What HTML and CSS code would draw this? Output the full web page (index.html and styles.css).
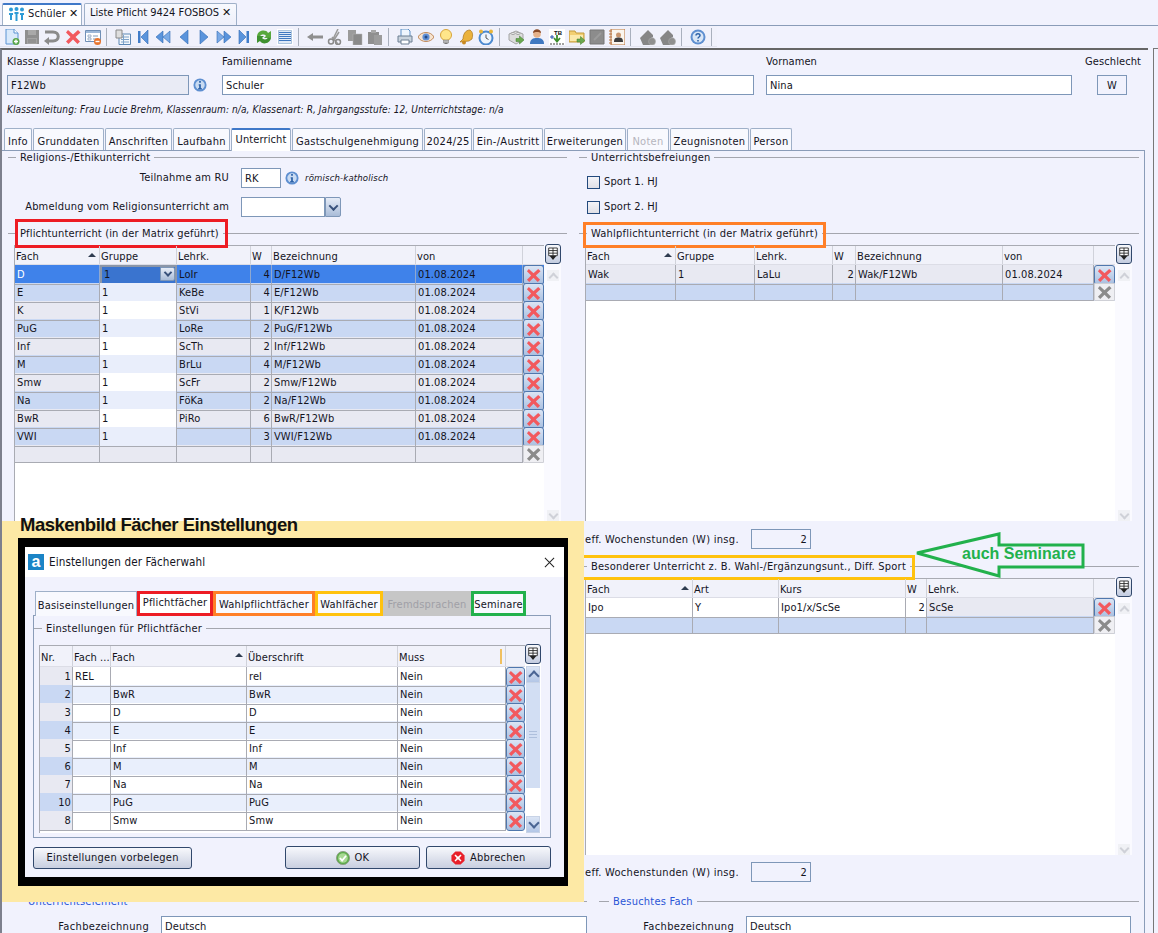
FILE: index.html
```html
<!DOCTYPE html>
<html lang="de">
<head>
<meta charset="utf-8">
<title>Schüler</title>
<link rel="stylesheet" href="styles.css">
</head>
<body>
<svg class="defs" width="0" height="0" aria-hidden="true">
<defs>
<symbol id="i-new" viewBox="0 0 16 16"><path d="M2 0h8l4 4v11H2z" fill="#d9e9fb" stroke="#5b93d2"/><path d="M10 0v4h4" fill="#fff" stroke="#5b93d2"/><circle cx="12" cy="12.5" r="3.5" fill="#5aa64a"/><path d="M10 12.5h4M12 10.5v4" stroke="#fff" stroke-width="1.4"/></symbol>
<symbol id="i-save" viewBox="0 0 16 16"><path d="M1 1h14v14H1z" fill="#8f8f8f"/><path d="M4 1h8v5H4z" fill="#a9a9a9"/><path d="M3 9h10v6H3z" fill="#a3a3a3"/><path d="M4 11h8M4 13h8" stroke="#808080"/></symbol>
<symbol id="i-undo" viewBox="0 0 16 16"><path d="M1 3h8c7 0 7 9 0 9H4" fill="none" stroke="#8b8b8b" stroke-width="3"/><path d="M5 8v8L0 12z" fill="#8b8b8b"/></symbol>
<symbol id="i-x" viewBox="0 0 16 16"><path d="M3 1l5 4.500L13 1l2.500 2.500L10.500 8l4.500 4.500L12.500 15 8 10.500 3.500 15 1 12.500 5.500 8 1 3.500z" fill="#f2595e"/></symbol>
<symbol id="i-xg" viewBox="0 0 16 16"><path d="M3 1l5 4.500L13 1l2.500 2.500L10.500 8l4.500 4.500L12.500 15 8 10.500 3.500 15 1 12.500 5.500 8 1 3.500z" fill="#8b8b8b"/></symbol>
<symbol id="i-card" viewBox="0 0 16 16"><path d="M.5 1.500h15v11H.5z" fill="#fff" stroke="#6f8fb6"/><path d="M1 2h14v2H1z" fill="#9db8d8"/><path d="M3 6h3v2H3zM3 9h3v2H3z" fill="#fff" stroke="#7f9ab8" stroke-width=".7"/><path d="M8 7h5M8 10h3" stroke="#7f9ab8"/><circle cx="12.500" cy="12.500" r="3.500" fill="#e8742c"/><path d="M10.500 12.500h4" stroke="#fff" stroke-width="1.400"/></symbol>
<symbol id="i-clip" viewBox="0 0 16 16"><path d="M4 5h11.500v10.500H4z" fill="#f4f7fb" stroke="#5d88b6"/><path d="M6 8h8M6 10.500h8M6 13h8M8.500 6v9" stroke="#7ea3c9"/><path d="M1 1h6v8H1z" fill="#dedede" stroke="#8a8a8a"/></symbol>
<symbol id="i-first" viewBox="0 0 12 16"><path d="M1 2h2.500v12H1z" fill="#3f7cc9"/><path d="M11 1v14L4 8z" fill="#5a94dc" stroke="#2f69b4" stroke-width=".6"/></symbol>
<symbol id="i-prev2" viewBox="0 0 16 16"><path d="M8 2v12L1 8z" fill="#5a94dc" stroke="#2f69b4" stroke-width=".6"/><path d="M15 2v12L8 8z" fill="#7aaae6" stroke="#2f69b4" stroke-width=".6"/></symbol>
<symbol id="i-prev" viewBox="0 0 10 16"><path d="M9 1v14L1 8z" fill="#5a94dc" stroke="#2f69b4" stroke-width=".6"/></symbol>
<symbol id="i-next" viewBox="0 0 10 16"><path d="M1 1v14l8-7z" fill="#5a94dc" stroke="#2f69b4" stroke-width=".6"/></symbol>
<symbol id="i-next2" viewBox="0 0 16 16"><path d="M1 2v12l7-6z" fill="#7aaae6" stroke="#2f69b4" stroke-width=".6"/><path d="M8 2v12l7-6z" fill="#5a94dc" stroke="#2f69b4" stroke-width=".6"/></symbol>
<symbol id="i-last" viewBox="0 0 12 16"><path d="M8.500 2H11v12H8.500z" fill="#3f7cc9"/><path d="M1 1v14l7-7z" fill="#5a94dc" stroke="#2f69b4" stroke-width=".6"/></symbol>
<symbol id="i-sync" viewBox="0 0 16 16"><path d="M1 7c1-6 9-7 11-3l3-2v7H8l2-2C8.500 5 5 5 4 7.500z" fill="#57a83c"/><path d="M15 9c-1 6-9 7-11 3l-3 2V7h7L6 9c1.500 2 5 2 6-.5z" fill="#3f9130"/></symbol>
<symbol id="i-list" viewBox="0 0 16 16"><path d="M0 0h16v16H0z" fill="#fff"/><path d="M1.500 1.500h13v13h-13z" fill="#dfe9f6" stroke="#7ea3c9" stroke-width=".6"/><path d="M2 3.500h12M2 5.500h12M2 7.500h12M2 9.500h12M2 11.500h12" stroke="#3f78c0"/></symbol>
<symbol id="i-back" viewBox="0 0 16 16"><path d="M0 8l6-4v2.500h10v3H6V12z" fill="#8f8f8f"/></symbol>
<symbol id="i-cut" viewBox="0 0 16 16"><path d="M11 0L6 10M12 3L7 11" stroke="#9a9a9a" stroke-width="1.500"/><path d="M5 8l6 7" stroke="#9a9a9a" stroke-width="1.500"/><circle cx="4" cy="12.500" r="2.500" fill="none" stroke="#8a8a8a" stroke-width="1.500"/><circle cx="11" cy="13" r="2.500" fill="none" stroke="#8a8a8a" stroke-width="1.500"/></symbol>
<symbol id="i-copy" viewBox="0 0 16 16"><path d="M1 1h8v11H1z" fill="#9b9b9b"/><path d="M6 5h9v11H6z" fill="#8a8a8a" stroke="#b5b5b5" stroke-width=".5"/></symbol>
<symbol id="i-paste" viewBox="0 0 16 16"><path d="M1 3h11v12H1z" fill="#8f8f8f"/><path d="M4 1h5v3H4z" fill="#a8a8a8"/><path d="M7 6h8v10H7z" fill="#9c9c9c"/></symbol>
<symbol id="i-print" viewBox="0 0 16 16"><path d="M4 0h7l2 2v6H4z" fill="#eef5fd" stroke="#5d8fc6"/><path d="M1 7h14v6H1z" fill="#c9d3dd" stroke="#6c7f92"/><path d="M4 11h8v4H4z" fill="#fff" stroke="#6c7f92"/></symbol>
<symbol id="i-eye" viewBox="0 0 16 16"><path d="M0 8c3-6 13-6 16 0-3 6-13 6-16 0z" fill="#f6e3cf" stroke="#c08a5c"/><circle cx="8" cy="8" r="3.600" fill="#5f8fd6"/><circle cx="8" cy="8" r="1.500" fill="#234a86"/></symbol>
<symbol id="i-bulb" viewBox="0 0 16 16"><circle cx="8" cy="6" r="5.500" fill="#ffe68a" stroke="#d8a43a"/><path d="M5.500 11h5v3h-5z" fill="#b7b7b7" stroke="#777" stroke-width=".5"/><path d="M6.500 14.500h3" stroke="#777"/></symbol>
<symbol id="i-bell" viewBox="0 0 16 16"><path d="M12 1c3 2 3 5 2 9l-3 2-9 1 3-3c0-4 2-9 7-9z" fill="#eab23d" stroke="#a9741b" stroke-width=".7"/><circle cx="6" cy="13.500" r="2" fill="#c98a22"/></symbol>
<symbol id="i-clock" viewBox="0 0 16 16"><circle cx="8" cy="9" r="6.500" fill="#eef5fd" stroke="#4c8ad0" stroke-width="2"/><path d="M8 5.500V9l2.500 1.500" fill="none" stroke="#555"/><circle cx="3" cy="2.500" r="2" fill="#e8b53a"/><circle cx="13" cy="2.500" r="2" fill="#e8b53a"/></symbol>
<symbol id="i-lego" viewBox="0 0 16 16"><path d="M1 5l7-3 7 3v6l-7 4-7-4z" fill="#dcdcdc" stroke="#a4a4a4"/><ellipse cx="5" cy="4.500" rx="2" ry="1" fill="#f0f0f0" stroke="#a4a4a4"/><ellipse cx="10" cy="4.500" rx="2" ry="1" fill="#f0f0f0" stroke="#a4a4a4"/><path d="M8 9.500h3.500V7L16 11l-4.500 4v-2.500H8z" fill="#6aa84f" stroke="#3c7d2c" stroke-width=".5"/></symbol>
<symbol id="i-person" viewBox="0 0 16 16"><circle cx="8" cy="5" r="3.800" fill="#e6b28a"/><path d="M4 4c0-5 8-5 8 0-2-1.500-6-1.500-8 0z" fill="#8a4a26"/><path d="M1 15c0-5 3-6 7-6s7 1 7 6z" fill="#3f78c0"/></symbol>
<symbol id="i-folder" viewBox="0 0 16 16"><path d="M0 2h6l1 2h8v9H0z" fill="#f2cf72" stroke="#c39a3c"/><path d="M1 6h13v6H1z" fill="#fbe9ac"/><path d="M8 10h3.500V7.500L16 11.500 11.500 15.500V13H8z" fill="#6aa84f" stroke="#3c7d2c" stroke-width=".5"/></symbol>
<symbol id="i-gsq" viewBox="0 0 16 16"><path d="M1 1h14v14H1z" fill="#8c8c8c" stroke="#777"/><path d="M5 11l7-7" stroke="#9b9b9b" stroke-width="2"/></symbol>
<symbol id="i-note" viewBox="0 0 16 16"><path d="M2 0h14v16H2z" fill="#fbf6ee" stroke="#b8733b"/><path d="M0 2h3M0 5h3M0 8h3M0 11h3M0 14h3" stroke="#b8733b"/><circle cx="9.500" cy="6" r="2.500" fill="#c9976f"/><path d="M5 13c0-4 2-4.500 4.500-4.500S14 9 14 13z" fill="#3d3d3d"/></symbol>
<symbol id="i-gpack" viewBox="0 0 16 16"><path d="M0 9L8 1l5 5v2h-2l3 1v5l-4 2H3z" fill="#868686"/><circle cx="12" cy="12.500" r="3.500" fill="#8f8f8f" stroke="#a9a9a9" stroke-width=".6"/></symbol>
<symbol id="i-help" viewBox="0 0 16 16"><circle cx="8" cy="8" r="7.500" fill="#5e8fd0"/><circle cx="8" cy="8" r="5.500" fill="#d9e6f6"/><path d="M6 6.500C6 4 10 4 10 6.500 10 8 8 8 8 9.500" fill="none" stroke="#2d62a8" stroke-width="1.500"/><path d="M7.200 11h1.600v1.600H7.200z" fill="#2d62a8"/></symbol>
<symbol id="i-info" viewBox="0 0 16 16"><circle cx="8" cy="8" r="7.500" fill="#5e8fd0"/><circle cx="8" cy="8" r="5.400" fill="#c9dbf2"/><path d="M7 3.500h2v2H7zM6.500 7H9v4.500h1V13H6v-1.500h1V8.500h-.5z" fill="#2d62a8"/></symbol>
<symbol id="i-grp" viewBox="0 0 16 14"><circle cx="2.500" cy="2.500" r="2" fill="#2e9bd6"/><circle cx="8" cy="2" r="2" fill="#2e9bd6"/><circle cx="13.500" cy="2.500" r="2" fill="#2e9bd6"/><path d="M.5 6h4v2h-1v5h-2V8h-1zM6 5h4v2H9v7H7V7H6zM11.500 6h4v2h-1v5h-2V8h-1z" fill="#2e9bd6"/></symbol>
<symbol id="i-ok" viewBox="0 0 16 16"><circle cx="8" cy="8" r="7.500" fill="#5dad4a" stroke="#8b9a84"/><circle cx="8" cy="8" r="5.500" fill="#a8d993"/><path d="M4.500 8l2.500 3 4.500-5.500" fill="none" stroke="#fff" stroke-width="2"/></symbol>
<symbol id="i-abort" viewBox="0 0 16 16"><path d="M5 .5h6L15.500 5v6L11 15.500H5L.5 11V5z" fill="#e8202a"/><path d="M5 4l3 2.500L11 4l1 1-2.500 3L12 11l-1 1-3-2.500L5 12l-1-1 2.500-3L4 5z" fill="#fff"/></symbol>
<symbol id="i-opt" viewBox="0 0 14 16"><path d="M2 1h10v9H2z" fill="#fff" stroke="#222"/><path d="M2 4h10M7 1v9M2 7h10" stroke="#222"/><path d="M3 10h8l-4 5z" fill="#222"/></symbol>
</defs>
</svg>

<div class="doctabs">
  <div class="doctab doctab-on"><svg class="ic-grp"><use href="#i-grp"/></svg><span>Schüler</span><b class="doc-x">✕</b></div>
  <div class="doctab doctab-list"><span>Liste Pflicht 9424 FOSBOS</span><b class="doc-x">✕</b></div>
</div>

<div class="toolbar">
  <div class="tools">
    <svg class="ti"><use href="#i-new"/></svg><svg class="ti"><use href="#i-save"/></svg><svg class="ti"><use href="#i-undo"/></svg><svg class="ti"><use href="#i-x"/></svg><svg class="ti"><use href="#i-card"/></svg><i class="sep"></i>
    <svg class="ti"><use href="#i-clip"/></svg><svg class="ti"><use href="#i-first"/></svg><svg class="ti"><use href="#i-prev2"/></svg><svg class="ti"><use href="#i-prev"/></svg><svg class="ti"><use href="#i-next"/></svg><svg class="ti"><use href="#i-next2"/></svg><svg class="ti"><use href="#i-last"/></svg><svg class="ti"><use href="#i-sync"/></svg><svg class="ti"><use href="#i-list"/></svg><i class="sep"></i>
    <svg class="ti"><use href="#i-back"/></svg><svg class="ti"><use href="#i-cut"/></svg><svg class="ti"><use href="#i-copy"/></svg><svg class="ti"><use href="#i-paste"/></svg><i class="sep"></i>
    <svg class="ti"><use href="#i-print"/></svg><svg class="ti"><use href="#i-eye"/></svg><svg class="ti"><use href="#i-bulb"/></svg><svg class="ti"><use href="#i-bell"/></svg><svg class="ti"><use href="#i-clock"/></svg><i class="sep"></i>
    <svg class="ti"><use href="#i-lego"/></svg><svg class="ti"><use href="#i-person"/></svg>
    <svg class="ti" viewBox="0 0 16 16"><rect width="16" height="16" fill="#fff"/><text x="5" y="6" class="tb-text">TB</text><path d="M8 6v6M5 9l3 3.500L11 9" fill="none" stroke="#3c8d2c" stroke-width="1.800"/><path d="M1 8h4M3 6v4" stroke="#2550b0"/><path d="M1 15h14" stroke="#444" stroke-dasharray="2 1"/></svg>
    <svg class="ti"><use href="#i-folder"/></svg><svg class="ti"><use href="#i-gsq"/></svg><svg class="ti"><use href="#i-note"/></svg><i class="sep"></i>
    <svg class="ti"><use href="#i-gpack"/></svg><svg class="ti"><use href="#i-gpack"/></svg><i class="sep"></i>
    <svg class="ti"><use href="#i-help"/></svg><i class="sep"></i>
  </div>
</div>

<div class="workspace">
<main class="main">
  <header class="head">
    <label class="lab lab-a">Klasse / Klassengruppe</label><label class="lab lab-b">Familienname</label><label class="lab lab-c">Vornamen</label><label class="lab lab-d">Geschlecht</label>
    <div class="inp inp-ro inp-a">F12Wb</div><svg class="info info-a"><use href="#i-info"/></svg>
    <div class="inp inp-b">Schuler</div><div class="inp inp-c">Nina</div><div class="inp inp-ro inp-d">W</div>
    <p class="klass">Klassenleitung: Frau Lucie Brehm, Klassenraum: n/a, Klassenart: R, Jahrgangsstufe: 12, Unterrichtstage: n/a</p>
  </header>

  <nav class="tabs">
    <span class="tab">Info</span><span class="tab">Grunddaten</span><span class="tab">Anschriften</span><span class="tab">Laufbahn</span><span class="tab tab-on">Unterricht</span><span class="tab">Gastschulgenehmigung</span><span class="tab">2024/25</span><span class="tab">Ein-/Austritt</span><span class="tab">Erweiterungen</span><span class="tab tab-off">Noten</span><span class="tab">Zeugnisnoten</span><span class="tab">Person</span>
  </nav>

  <section class="panel">
    <div class="upper">
      <div class="col">
        <div class="legend"><span class="ltext">Religions-/Ethikunterricht</span></div>
        <div class="form-row row-ru"><span class="flabel">Teilnahme am RU</span><div class="inp inp-ru">RK</div><svg class="info"><use href="#i-info"/></svg><em class="rk">römisch-katholisch</em></div>
        <div class="form-row row-ab"><span class="flabel">Abmeldung vom Religionsunterricht am</span><div class="inp inp-date"></div><span class="drop"><i></i></span></div>
        <div class="legend legend-p"><span class="ltext mark mark-red">Pflichtunterricht (in der Matrix geführt)</span></div>
        <div class="gridbox box-l">
          <div class="gmain g-p">
            <div class="gh"><span class="sorted">Fach</span><span>Gruppe</span><span>Lehrk.</span><span>W</span><span>Bezeichnung</span><span>von</span><span></span></div>
            <div class="gr sel"><span>D</span><span class="combo"><span>1</span><span class="drop"><i></i></span></span><span>LoIr</span><span class="num">4</span><span>D/F12Wb</span><span>01.08.2024</span><span class="del"><svg><use href="#i-x"/></svg></span></div>
            <div class="gr blue"><span>E</span><span class="lite">1</span><span>KeBe</span><span class="num">4</span><span>E/F12Wb</span><span>01.08.2024</span><span class="del"><svg><use href="#i-x"/></svg></span></div>
            <div class="gr grey"><span>K</span><span class="wh">1</span><span>StVi</span><span class="num">1</span><span>K/F12Wb</span><span>01.08.2024</span><span class="del"><svg><use href="#i-x"/></svg></span></div>
            <div class="gr blue"><span>PuG</span><span class="lite">1</span><span>LoRe</span><span class="num">2</span><span>PuG/F12Wb</span><span>01.08.2024</span><span class="del"><svg><use href="#i-x"/></svg></span></div>
            <div class="gr grey"><span>Inf</span><span class="wh">1</span><span>ScTh</span><span class="num">2</span><span>Inf/F12Wb</span><span>01.08.2024</span><span class="del"><svg><use href="#i-x"/></svg></span></div>
            <div class="gr blue"><span>M</span><span class="lite">1</span><span>BrLu</span><span class="num">4</span><span>M/F12Wb</span><span>01.08.2024</span><span class="del"><svg><use href="#i-x"/></svg></span></div>
            <div class="gr grey"><span>Smw</span><span class="wh">1</span><span>ScFr</span><span class="num">2</span><span>Smw/F12Wb</span><span>01.08.2024</span><span class="del"><svg><use href="#i-x"/></svg></span></div>
            <div class="gr blue"><span>Na</span><span class="lite">1</span><span>FöKa</span><span class="num">2</span><span>Na/F12Wb</span><span>01.08.2024</span><span class="del"><svg><use href="#i-x"/></svg></span></div>
            <div class="gr grey"><span>BwR</span><span class="wh">1</span><span>PiRo</span><span class="num">6</span><span>BwR/F12Wb</span><span>01.08.2024</span><span class="del"><svg><use href="#i-x"/></svg></span></div>
            <div class="gr blue"><span>VWI</span><span class="lite">1</span><span></span><span class="num">3</span><span>VWI/F12Wb</span><span>01.08.2024</span><span class="del"><svg><use href="#i-x"/></svg></span></div>
            <div class="gr grey"><span></span><span></span><span></span><span></span><span></span><span></span><span class="del del-g"><svg><use href="#i-xg"/></svg></span></div>
          </div>
          <div class="gside"><span class="opt"><svg><use href="#i-opt"/></svg></span><span class="sc sc-up"></span><span class="sc-fill"></span><span class="sc sc-dn"></span></div>
        </div>
      </div>

      <div class="col">
        <div class="legend"><span class="ltext">Unterrichtsbefreiungen</span></div>
        <div class="check check-1"><i></i><span>Sport 1. HJ</span></div>
        <div class="check check-2"><i></i><span>Sport 2. HJ</span></div>
        <div class="legend legend-w"><span class="ltext mark mark-orange">Wahlpflichtunterricht (in der Matrix geführt)</span></div>
        <div class="gridbox box-r">
          <div class="gmain g-w">
            <div class="gh"><span class="sorted">Fach</span><span>Gruppe</span><span>Lehrk.</span><span>W</span><span>Bezeichnung</span><span>von</span><span></span></div>
            <div class="gr grey"><span>Wak</span><span>1</span><span>LaLu</span><span class="num">2</span><span>Wak/F12Wb</span><span>01.08.2024</span><span class="del"><svg><use href="#i-x"/></svg></span></div>
            <div class="gr blue"><span></span><span></span><span></span><span></span><span></span><span></span><span class="del del-g"><svg><use href="#i-xg"/></svg></span></div>
          </div>
          <div class="gside"><span class="opt"><svg><use href="#i-opt"/></svg></span><span class="sc sc-up"></span><span class="sc-fill"></span><span class="sc sc-dn"></span></div>
        </div>
        <div class="eff"><span>eff. Wochenstunden (W) insg.</span><div class="inp inp-eff">2</div></div>
        <div class="legend legend-b"><span class="ltext mark mark-yellow">Besonderer Unterricht z. B. Wahl-/Ergänzungsunt., Diff. Sport</span></div>
        <div class="gridbox box-r2">
          <div class="gmain g-b">
            <div class="gh"><span class="sorted">Fach</span><span>Art</span><span>Kurs</span><span>W</span><span>Lehrk.</span><span></span></div>
            <div class="gr grey"><span class="wh">Ipo</span><span class="wh">Y</span><span class="wh">Ipo1/x/ScSe</span><span class="num wh">2</span><span>ScSe</span><span class="del"><svg><use href="#i-x"/></svg></span></div>
            <div class="gr blue"><span></span><span></span><span></span><span></span><span></span><span class="del del-g"><svg><use href="#i-xg"/></svg></span></div>
          </div>
          <div class="gside"><span class="opt"><svg><use href="#i-opt"/></svg></span><span class="sc sc-up"></span><span class="sc-fill"></span><span class="sc sc-dn"></span></div>
        </div>
        <div class="eff eff-2"><span>eff. Wochenstunden (W) insg.</span><div class="inp inp-eff">2</div></div>
      </div>
    </div>

    <div class="lower">
      <div class="lcol-l">
        <div class="legend legend-blue legend-ue"><span class="ltext">Unterrichtselement</span></div>
        <div class="fb fb-l"><span>Fachbezeichnung</span><div class="inp">Deutsch</div></div>
      </div>
      <div class="lcol-r">
        <div class="legend legend-blue legend-bf"><span class="ltext">Besuchtes Fach</span></div>
        <div class="fb fb-r"><span>Fachbezeichnung</span><div class="inp">Deutsch</div></div>
      </div>
    </div>
  </section>
</main>
<div class="edge"></div>
</div>

<aside class="callout">
  <svg class="arrow" viewBox="0 0 172 46"><path d="M3 21L85 2v11h84v22H85v9z" fill="#f1f2fd" stroke="#22b14c" stroke-width="3"/></svg>
  <span class="callout-text">auch Seminare</span>
</aside>

<aside class="overlay">
  <h2 class="ov-title">Maskenbild Fächer Einstellungen</h2>
  <div class="frame">
    <div class="dlg-title"><span class="logo">a</span><span class="dlg-name">Einstellungen der Fächerwahl</span><svg class="dlg-x" viewBox="0 0 12 12"><path d="M1 1l10 10M11 1L1 11" stroke="#222" stroke-width="1.100"/></svg></div>
    <div class="dlg-body">
      <div class="dtabs">
        <span class="dtab">Basiseinstellungen</span><span class="dtab dt-red">Pflichtfächer</span><span class="dtab dt-or">Wahlpflichtfächer</span><span class="dtab dt-ye">Wahlfächer</span><span class="dtab dt-gr">Fremdsprachen</span><span class="dtab dt-gn">Seminare</span>
      </div>
      <div class="dpanel">
        <div class="legend legend-d"><span class="ltext">Einstellungen für Pflichtfächer</span></div>
        <div class="gridbox box-d">
          <div class="gmain g-d">
            <div class="gh"><span>Nr.</span><span>Fach ...</span><span class="sorted">Fach</span><span>Überschrift</span><span class="muss">Muss</span><span></span></div>
            <div class="gr dodd"><span class="num nr">1</span><span>REL</span><span></span><span>rel</span><span>Nein</span><span class="del"><svg><use href="#i-x"/></svg></span></div>
            <div class="gr deven"><span class="num nr">2</span><span></span><span>BwR</span><span>BwR</span><span>Nein</span><span class="del"><svg><use href="#i-x"/></svg></span></div>
            <div class="gr dodd"><span class="num nr">3</span><span></span><span>D</span><span>D</span><span>Nein</span><span class="del"><svg><use href="#i-x"/></svg></span></div>
            <div class="gr deven"><span class="num nr">4</span><span></span><span>E</span><span>E</span><span>Nein</span><span class="del"><svg><use href="#i-x"/></svg></span></div>
            <div class="gr dodd"><span class="num nr">5</span><span></span><span>Inf</span><span>Inf</span><span>Nein</span><span class="del"><svg><use href="#i-x"/></svg></span></div>
            <div class="gr deven"><span class="num nr">6</span><span></span><span>M</span><span>M</span><span>Nein</span><span class="del"><svg><use href="#i-x"/></svg></span></div>
            <div class="gr dodd"><span class="num nr">7</span><span></span><span>Na</span><span>Na</span><span>Nein</span><span class="del"><svg><use href="#i-x"/></svg></span></div>
            <div class="gr deven"><span class="num nr">10</span><span></span><span>PuG</span><span>PuG</span><span>Nein</span><span class="del"><svg><use href="#i-x"/></svg></span></div>
            <div class="gr dodd"><span class="num nr">8</span><span></span><span>Smw</span><span>Smw</span><span>Nein</span><span class="del"><svg><use href="#i-x"/></svg></span></div>
          </div>
          <div class="gside dside"><span class="opt"><svg><use href="#i-opt"/></svg></span><span class="dsc dsc-up"></span><span class="dthumb"></span><span class="sc-fill"></span><span class="dsc dsc-dn"></span></div>
        </div>
      </div>
      <div class="dbtns">
        <span class="btn btn-pre">Einstellungen vorbelegen</span>
        <span class="btn btn-ok"><svg><use href="#i-ok"/></svg>OK</span>
        <span class="btn btn-ab"><svg><use href="#i-abort"/></svg>Abbrechen</span>
      </div>
    </div>
  </div>
</aside>
</body>
</html>
```

FILE: styles.css
```css
* { box-sizing: border-box; }
html, body { margin: 0; height: 933px; overflow: hidden; }
body { position: relative; width: 1158px; background: #f1f2fd; color: #14141e; font: 11px/14px "DejaVu Sans Condensed", "DejaVu Sans", sans-serif; letter-spacing: .1px; }
.defs { position: absolute; }

/* Document tabs */
.doctabs { height: 26px; padding: 3px 0 0 2px; display: flex; gap: 2px; border-bottom: 1px solid #8a9cb8; }
.doctab { height: 22px; display: flex; align-items: center; padding-bottom: 3px; border: 1px solid #9fb0c8; border-bottom: 0; border-radius: 2px 2px 0 0; background: linear-gradient(#f8f9fe, #eef0fa); }
.doctab-on { width: 80px; background: #fff; border-top: 2px solid #3f78c8; padding-left: 5px; padding-bottom: 2px; }
.doctab-list { width: 153px; padding-left: 5px; letter-spacing: 0; }
.ic-grp { width: 17px; height: 14px; margin-right: 3px; }
.doc-x { font: 700 11px/12px "DejaVu Sans", sans-serif; margin-left: 3px; color: #111; }

/* Toolbar */
.toolbar { height: 22px; }
.tools { width: 717px; height: 21px; display: flex; align-items: center; padding: 2px 0 0 2px; background: #f0f1fb; border-bottom: 1px solid #e2e3ee; }
.ti { width: 16px; height: 16px; margin: 0 2.1px; flex: none; }
.sep { width: 1px; height: 18px; background: #a9b0bd; margin: 0 6px 0 3px; flex: none; }
.tb-text { font: 700 6px "Liberation Sans", sans-serif; fill: #111; }

/* Workspace */
.workspace { display: flex; height: 885px; }
.main { width: 1148px; border-top: 2px solid #666; border-left: 2px solid #7d808d; }
.edge { margin-left: 5px; flex: 1; border-top: 1px solid #777; border-left: 1px solid #777; }

.head { height: 78px; display: grid; grid-template-columns: 5px 182px 33px 532px 12px 306px 13px 60px; grid-template-rows: 20px 20px 1fr; padding-top: 5px; }
.lab { align-self: start; }
.lab-a { grid-column: 2; }
.lab-b { grid-column: 3 / 5; padding-left: 33px; }
.lab-c { grid-column: 6; }
.lab-d { grid-column: 8; white-space: nowrap; }
.inp { height: 20px; border: 1px solid #7e97b8; background: #fff; padding: 0 3px; line-height: 19px; }
.inp-ro { background: #e9ebf5; }
.inp-a { grid-column: 2; grid-row: 2; }
.info { width: 14px; height: 14px; }
.info-a { grid-column: 3; grid-row: 2; align-self: center; margin-left: 4px; }
.inp-b { grid-column: 4; grid-row: 2; }
.inp-c { grid-column: 6; grid-row: 2; }
.inp-d { grid-column: 8; grid-row: 2; width: 30px; margin-left: 12px; text-align: center; background: #f1f2fd; }
.klass { grid-column: 2 / 8; grid-row: 3; margin: 8px 0 0; font-size: 10px; font-style: italic; letter-spacing: .09px; }

/* Tabs */
.tabs { height: 22px; display: grid; grid-template-columns: 28px 71px 67px 57px 60px 131px 48px 70px 82px 42px 79px 42px; column-gap: 1px; padding-left: 2px; justify-content: start; position: relative; z-index: 1; }
.tab { height: 22px; padding-top: 6px; text-align: center; white-space: nowrap; letter-spacing: .3px; border: 1px solid #9fb0c8; border-bottom: 0; border-radius: 2px 2px 0 0; background: #f8f9fe; }
.tab-on { height: 23px; padding-top: 3px; background: #fff; border-top: 2px solid #3f78c8; letter-spacing: .1px; }
.tab-off { color: #b5b5bd; }

/* Panel */
.panel { margin-right: 3px; border-top: 1px solid #8a9cb8; border-right: 1px solid #8a9cb8; padding: 0 6px; height: 790px; }
.upper { display: grid; grid-template-columns: 559px 560px; column-gap: 12px; height: 744px; }
.col { min-width: 0; }
.legend { display: flex; align-items: center; height: 13px; }
.legend::before { content: ""; width: 8px; height: 1px; background: #a4a6ae; flex: none; }
.legend::after { content: ""; flex: 1; height: 1px; background: #a4a6ae; }
.ltext { padding: 0 4px; white-space: nowrap; position: relative; letter-spacing: .22px; }
.mark::after { content: ""; position: absolute; top: -8px; bottom: -7px; border: 3px solid; pointer-events: none; }
.mark-red { letter-spacing: .15px; }
.mark-red::after { left: -1px; right: -5px; border-color: #ed1c24; top: -8px; }
.mark-orange::after { left: -4px; right: -4px; border-color: #ff7f27; top: -5px; }
.mark-yellow::after { left: -12px; right: -5px; border-color: #ffc20e; top: -5px; bottom: -6px; }

.form-row { display: flex; align-items: center; }
.row-ru { margin-top: 4px; }
.row-ab { margin-top: 9px; }
.flabel { width: 221px; text-align: right; margin-right: 12px; white-space: nowrap; letter-spacing: .2px; }
.inp-ru { width: 40px; margin-right: 4px; }
.rk { font-size: 9.500px; margin-left: 6px; letter-spacing: .15px; }
.inp-date { width: 84px; }
.drop { width: 16px; height: 20px; display: flex; align-items: center; justify-content: center; border: 1px solid #7e97b8; border-radius: 0 2px 2px 0; background: linear-gradient(#e6ecf7, #a9bcd8); flex: none; }
.drop i { width: 7px; height: 7px; border: solid #37507a; border-width: 0 2px 2px 0; transform: rotate(45deg) translate(-1px, -1px); }
.legend-p { margin-top: 10px; }
.legend-w { margin-top: 13px; }
.legend-b { margin-top: 11px; }

.check { display: flex; align-items: center; gap: 4px; margin-left: 8px; height: 14px; }
.check i { width: 13px; height: 13px; border: 1px solid #234a7d; background: linear-gradient(#f4f4f8, #e0e0e6); }
.check-1 { margin-top: 11px; }
.check-2 { margin-top: 11px; }

/* Grids */
.gridbox { display: flex; margin-left: 6px; margin-top: 5px; height: 276px; }
.box-r2 { height: 277px; }
.gmain { width: 530px; background: #fff; border-left: 1px solid #a9abb3; border-top: 1px solid #a9abb3; }
.gside { width: 17px; display: flex; flex-direction: column; align-items: center; background: #fafaff; }
.gh, .gr { display: grid; }
.g-p .gh, .g-p .gr { grid-template-columns: 85px 77px 74px 21px 144px 107px 21px; }
.g-w .gh, .g-w .gr { grid-template-columns: 90px 79px 78px 23px 147px 91px 21px; }
.g-b .gh, .g-b .gr { grid-template-columns: 107px 86px 127px 21px 167px 21px; }
.g-d .gh, .g-d .gr { grid-template-columns: 33px 38px 136px 151px 108px 19px; }
.gh { height: 19px; background: #f1f2fa; border-bottom: 1px solid #dcdde6; }
.gh span { padding: 4px 0 0 1px; border-right: 1px solid #d0d2da; white-space: nowrap; position: relative; }
.gh span:last-child { border-right: 0; }
.sorted::after { content: ""; position: absolute; right: 3px; top: 7px; border: 4px solid transparent; border-top: 0; border-bottom: 4px solid #2f3c50; }
.gr { height: 18px; }
.gr > span { border-right: 1px solid #a9abb3; border-bottom: 1px solid #a9abb3; padding: 0 0 0 2px; line-height: 19px; white-space: nowrap; min-width: 0; }
.gr .num { text-align: right; padding: 0 1px 0 0; }
.blue { background: #c9d8f3; }
.grey { background: #e8e9f2; }
.sel { background: #3f82ea; }
.sel > span:first-child { color: #fff; }
.sel > span { border-right-color: #8fa8d0; }
.gr .lite { background: #e9eefb; }
.gr .wh { background: #fff; }
.gr .combo { display: flex; justify-content: space-between; padding: 0; border: 2px solid #8b96a8; background: #3a74cf; line-height: 15px; padding-left: 2px; }
.combo .drop { height: 14px; width: 15px; }
.combo .drop i { width: 6px; height: 6px; }
.gr .del { padding: 0; border: 1px solid #4f77ad; border-radius: 3px; background: linear-gradient(#dbe5f5, #a9bfe0); display: flex; align-items: center; justify-content: center; }
.gr .del-g { border: 1px solid #cfd0d6; background: #efeff3; border-radius: 1px; }
.del svg { width: 15px; height: 15px; }
.opt { width: 16px; height: 20px; margin-top: -1px; border: 1px solid #31486c; border-radius: 3px; background: linear-gradient(#f7f8fc, #c3cce0); display: flex; align-items: center; justify-content: center; flex: none; }
.opt svg { width: 12px; height: 14px; }
.sc { width: 12px; height: 11px; flex: none; position: relative; background: #f0f1f5; }
.sc-up { margin-top: 6px; }
.sc::after { content: ""; position: absolute; left: 3px; width: 5px; height: 5px; border: solid #cfd1d8; border-width: 2px 0 0 2px; }
.sc-up::after { top: 4px; transform: rotate(45deg); }
.sc-dn::after { top: 1px; transform: rotate(225deg); }
.sc-fill { flex: 1; }

.eff { display: flex; align-items: center; margin-left: 6px; margin-top: 8px; height: 20px; }
.eff span { width: 166px; white-space: nowrap; letter-spacing: .3px; padding-top: 1px; }
.inp-eff { width: 60px; text-align: right; background: #f1f2fd; }
.eff-2 { margin-top: 7px; }

/* Lower */
.lower { display: grid; grid-template-columns: 579px 540px; column-gap: 12px; }
.legend-blue .ltext { color: #2a55d6; }
.legend-ue::before { width: 16px; }
.legend-bf::before { width: 10px; }
.fb { display: grid; margin-top: 8px; align-items: center; }
.fb-l { grid-template-columns: 141px 426px; column-gap: 12px; }
.fb-r { grid-template-columns: 135px 385px; column-gap: 12px; }
.fb span { text-align: right; letter-spacing: .33px; white-space: nowrap; }
.fb .inp { height: 22px; }

/* Annotation arrow */
.callout { position: absolute; left: 914px; top: 532px; width: 172px; height: 46px; }
.arrow { width: 172px; height: 46px; display: block; }
.callout-text { position: absolute; left: 48px; top: 13px; font: 700 16px/18px "Liberation Sans", sans-serif; color: #22b14c; white-space: nowrap; letter-spacing: 0; }

/* Overlay screenshot */
.overlay { position: absolute; left: 2px; top: 521px; width: 582px; height: 381px; background: #fde9a5; }
.ov-title { position: absolute; left: 18px; top: -8px; margin: 0; font: 700 18.500px/24px "Liberation Sans", sans-serif; color: #111; letter-spacing: -.5px; white-space: nowrap; }
.frame { position: absolute; left: 16px; top: 17px; width: 550px; height: 348px; border: solid #000; border-width: 9px 4px 9px 7px; background: #f1f2fd; }
.dlg-title { height: 30px; background: #fff; display: flex; align-items: center; padding-left: 3px; }
.logo { width: 16px; height: 16px; background: #1b84c6; color: #fff; font: 700 16px/15px "Liberation Sans", sans-serif; text-align: center; margin-right: 5px; }
.dlg-name { font-size: 11.600px; }
.dlg-x { width: 11px; height: 11px; margin-left: auto; margin-right: 9px; }
.dlg-body { padding: 14px 13px 0 8px; }
.dtabs { height: 25px; display: grid; grid-template-columns: 102px 76px 102px 68px 88px 55px; margin-left: 2px; position: relative; z-index: 1; }
.dtab { text-align: center; padding-top: 7px; white-space: nowrap; letter-spacing: .2px; border: 1px solid #9fb0c8; border-bottom: 0; background: #f8f9fe; }
.dt-red, .dt-or, .dt-ye, .dt-gr, .dt-gn { border: 3px solid; padding-top: 4px; }
.dt-red { border-color: #ed1c24; background: #fff; padding-top: 2px; }
.dt-or { border-color: #ff7f27; }
.dt-ye { border-color: #ffc20e; }
.dt-gr { border-color: #c6c6c6; background: #c6c6c6; color: #a0a0a6; }
.dt-gn { border-color: #22b14c; }
.dpanel { height: 223px; margin-top: -1px; border: 1px solid #8a9cb8; padding: 6px 0 0; }
.box-d { height: 188px; margin: 10px 0 0 5px; }
.g-d { width: 486px; overflow: hidden; }
.g-d .gh { height: 21px; }
.g-d .gh span { padding-top: 5px; }
.gr .nr { background: #e8e9f2; }
.deven { background: #e9effc; }
.dodd { background: #fff; }
.deven .nr { background: #c9d8f3; }
.muss::before { content: ""; position: absolute; right: 3px; top: 3px; width: 2px; height: 15px; background: #f0c060; }
.dside { width: 16px; background: #fff; }
.dsc { width: 14px; height: 17px; background: linear-gradient(#dbe5f5, #b3c6e6); border: 1px solid #c8d3e6; flex: none; position: relative; }
.dsc::after { content: ""; position: absolute; left: 3px; width: 6px; height: 6px; border: solid #4a6593; border-width: 2px 0 0 2px; }
.dsc-up { margin-top: 2px; }
.dsc-up::after { top: 5px; transform: rotate(45deg); }
.dsc-dn::after { top: 2px; transform: rotate(225deg); }
.dthumb { width: 14px; height: 105px; flex: none; background: repeating-linear-gradient(#aebfdc 0 1px, #d2def3 1px 3px) center / 8px 9px no-repeat, #d2def3; }
.dbtns { display: flex; margin-top: 8px; }
.btn { height: 23px; display: flex; align-items: center; justify-content: center; gap: 5px; letter-spacing: .25px; border: 1px solid #31486c; border-radius: 3px; background: linear-gradient(#f7f8fc, #c9cfe0); }
.btn svg { width: 14px; height: 14px; }
.btn-pre { width: 160px; margin-top: 1px; height: 22px; }
.btn-ok { width: 135px; margin-left: 93px; }
.btn-ab { width: 126px; margin-left: 6px; }
```
